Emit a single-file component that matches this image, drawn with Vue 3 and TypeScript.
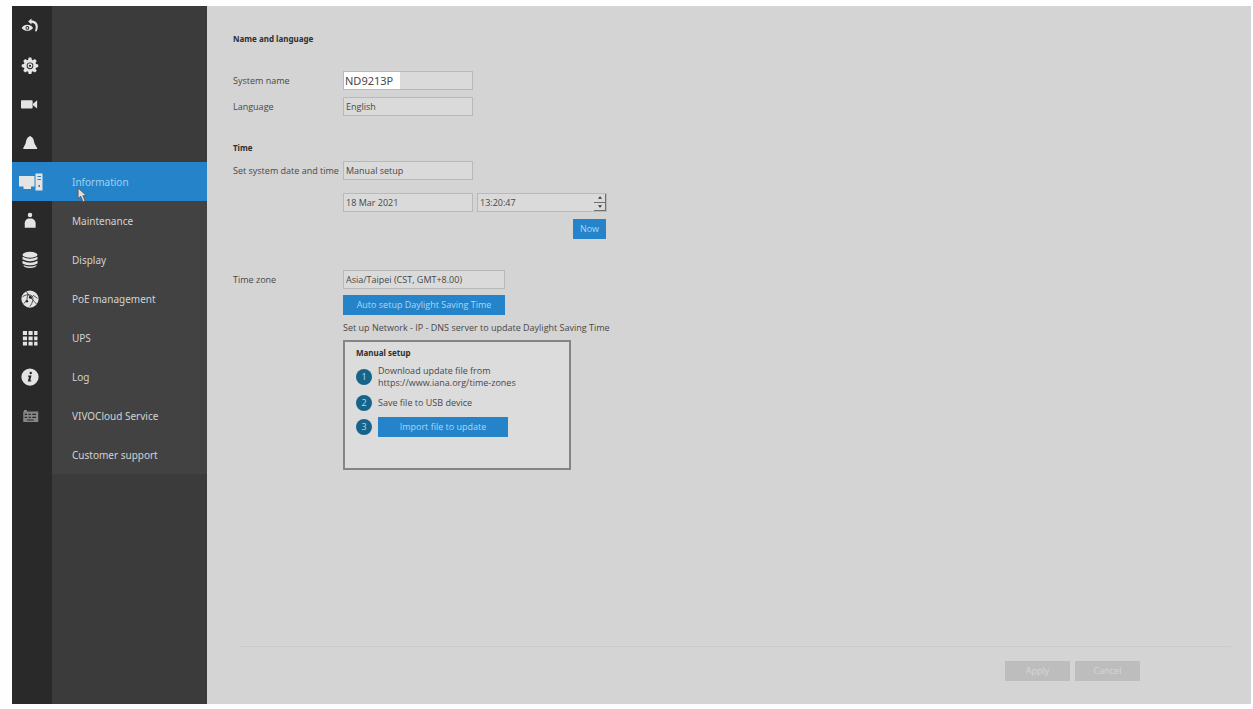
<script setup lang="ts">
import { ref } from 'vue'

type RailIcon =
  | 'back' | 'gear' | 'camera' | 'alarm' | 'system' | 'user'
  | 'storage' | 'network' | 'grid' | 'info' | 'keyboard'

interface RailItem {
  icon: RailIcon
  label: string
}

const rail: RailItem[] = [
  { icon: 'back', label: 'Back to live view' },
  { icon: 'gear', label: 'General' },
  { icon: 'camera', label: 'Camera' },
  { icon: 'alarm', label: 'Alarm' },
  { icon: 'system', label: 'System' },
  { icon: 'user', label: 'User' },
  { icon: 'storage', label: 'Storage' },
  { icon: 'network', label: 'Network' },
  { icon: 'grid', label: 'Applications' },
  { icon: 'info', label: 'About' },
  { icon: 'keyboard', label: 'Keyboard' },
]

const pages: string[] = [
  'Information',
  'Maintenance',
  'Display',
  'PoE management',
  'UPS',
  'Log',
  'VIVOCloud Service',
  'Customer support',
]

const activeIcon = ref<RailIcon>('system')
const activePage = ref('Information')
const systemName = ref('ND9213P')
const language = ref('English')
const timeMode = ref('Manual setup')
const date = ref('18 Mar 2021')
const time = ref('13:20:47')
const zone = ref('Asia/Taipei (CST, GMT+8.00)')
</script>

<template>
  <div class="app">
    <nav class="rail" aria-label="Sections">
      <button
        v-for="item in rail"
        :key="item.icon"
        type="button"
        class="rail-item"
        :class="{ active: item.icon === activeIcon }"
        :aria-label="item.label"
        @click="activeIcon = item.icon"
      >
        <svg v-if="item.icon === 'back'" viewBox="0 0 24 24">
          <path fill-rule="evenodd" d="M1 14.500C4 9 13 9 16 14.500C13 19.500 4 19.500 1 14.500ZM8.500 12A2.500 2.500 0 1 0 8.500 17A2.500 2.500 0 1 0 8.500 12Z" />
          <circle cx="8.500" cy="14.500" r="1.200" />
          <path d="M9.500 6L14 2V4.500C21.500 4.500 24.500 11 21 19H18.500C21 12.500 19.500 7.800 14 7.500V10Z" />
        </svg>
        <svg v-else-if="item.icon === 'gear'" viewBox="0 0 24 24">
          <path fill-rule="evenodd" d="M10.200 2h3.600l.7 3 1.300.5L18.500 4 21 6.500l-1.600 2.700.6 1.300 3 .7v3.600l-3 .7-.6 1.300L21 19.500 18.500 22l-2.700-1.600-1.300.6-.7 3h-3.600l-.7-3-1.300-.6L5.500 22 3 19.500l1.600-2.700-.6-1.300-3-.7v-3.600l3-.7.6-1.300L3 6.500 5.500 4l2.700 1.500 1.300-.5ZM12 8.500a4.500 4.500 0 1 0 0 9a4.500 4.500 0 1 0 0-9Z" />
          <path fill-rule="evenodd" d="M12 9.700a3.300 3.300 0 1 0 0 6.600a3.300 3.300 0 1 0 0-6.600ZM12 11.500a1.500 1.500 0 1 1 0 3a1.500 1.500 0 1 1 0-3Z" />
        </svg>
        <svg v-else-if="item.icon === 'camera'" viewBox="0 0 24 24">
          <path d="M0 8a1 1 0 0 1 1-1H14.500a1 1 0 0 1 1 1v9a1 1 0 0 1-1 1H1a1 1 0 0 1-1-1ZM16 11.500L21.500 7V18L16 13.500Z" />
        </svg>
        <svg v-else-if="item.icon === 'alarm'" viewBox="0 0 24 24">
          <path d="M10.700 3.500a1.500 1.500 0 0 1 2.800 0C17 5 17.300 9.500 18.200 13L21.500 18.500V20H3V18.500L6 13C6.900 9.500 7.200 5 10.700 3.500Z" />
        </svg>
        <svg v-else-if="item.icon === 'system'" class="wide" viewBox="0 0 26 20">
          <path d="M2 4H17.500V14.500H14V17H6.500V14.500H2Z" />
          <path fill-rule="evenodd" d="M18.500 1.500H25.500V18.500H18.500ZM20.500 4V5H24V4ZM20.500 7V8H24V7ZM21.500 13V15H23V13Z" />
        </svg>
        <svg v-else-if="item.icon === 'user'" viewBox="0 0 24 24">
          <circle cx="12" cy="4" r="3" />
          <path d="M9.500 8.500H14.500Q19.500 10.500 19.500 15V21H5V15Q5 10.500 9.500 8.500Z" />
        </svg>
        <svg v-else-if="item.icon === 'storage'" viewBox="0 0 24 24">
          <ellipse cx="12" cy="5" rx="10" ry="4" />
          <path d="M2 7.500Q12 13 22 7.500V11Q12 16.500 2 11ZM2 13Q12 18.500 22 13V16.500Q12 21.500 2 16.500Z" />
          <path d="M3 18.500Q12 23 21 18.500Q20 22.500 12 22.500Q4 22.500 3 18.500Z" />
        </svg>
        <svg v-else-if="item.icon === 'network'" viewBox="0 0 24 24">
          <circle cx="12" cy="12" r="11.500" />
          <path class="cut" d="M7 2Q12 10 21 19M2 9Q9 4 15 8Q18 13 12 22M4 18Q9 14 9 6M16 7L22 11" />
          <circle class="hole" cx="12.500" cy="9.500" r="2" />
          <circle class="hole" cx="8" cy="15" r="1.600" />
        </svg>
        <svg v-else-if="item.icon === 'grid'" viewBox="0 0 24 24">
          <path d="M2.500 2.500H8V8H2.500ZM10 2.500H15.500V8H10ZM17.500 2.500H22V8H17.500ZM2.500 10H8V15H2.500ZM10 10H15.500V15H10ZM17.500 10H22V15H17.500ZM2.500 17H8V22H2.500ZM10 17H15.500V22H10ZM17.500 17H22V22H17.500Z" />
        </svg>
        <svg v-else-if="item.icon === 'info'" viewBox="0 0 24 24">
          <circle cx="12" cy="12" r="11.500" />
          <circle class="hole" cx="13" cy="6.700" r="1.600" />
          <path class="hole" d="M9.500 10H14L12.300 16.500H14L13.500 18H9L10.700 11.500H9.200Z" />
        </svg>
        <svg v-else class="dim" viewBox="0 0 24 24">
          <path fill-rule="evenodd" d="M4 6V4H8V6H23V20H3V6ZM5 9V10.500H8V9ZM10 9V10.500H13V9ZM15 9V10.500H20V9ZM5 13V14.500H8V13ZM10 13V14.500H13V13ZM15 13V14.500H20V13ZM8 16.500V18H17V16.500Z" />
        </svg>
      </button>
    </nav>

    <nav class="submenu" aria-label="System pages">
      <a
        v-for="page in pages"
        :key="page"
        href="#"
        class="submenu-item"
        :class="{ active: page === activePage }"
        @click.prevent="activePage = page"
      >{{ page }}</a>
      <svg class="pointer" viewBox="0 0 12 18" aria-hidden="true">
        <path d="M1 1V13L4 10.500L6.500 16.500L9 15.500L6.500 9.800H10.500Z" />
      </svg>
    </nav>

    <main class="content">
      <form class="settings" @submit.prevent>
        <h2 class="title">Name and language</h2>

        <div class="row first">
          <label for="system-name">System name</label>
          <div class="field name-field">
            <input id="system-name" v-model="systemName" type="text" />
          </div>
        </div>
        <div class="row near">
          <label for="language">Language</label>
          <select id="language" v-model="language" class="field">
            <option>English</option>
          </select>
        </div>

        <h2 class="title time-title">Time</h2>
        <div class="row near">
          <label for="time-mode">Set system date and time</label>
          <select id="time-mode" v-model="timeMode" class="field">
            <option>Manual setup</option>
          </select>
        </div>

        <div class="indent clock">
          <input v-model="date" class="field" type="text" aria-label="Date" />
          <div class="field spin">
            <input v-model="time" type="text" aria-label="Time" />
            <div class="steppers">
              <button type="button" aria-label="Later"><svg viewBox="0 0 6 4"><path d="M3 0L6 4H0Z" /></svg></button>
              <button type="button" aria-label="Earlier"><svg viewBox="0 0 6 4"><path d="M3 4L6 0H0Z" /></svg></button>
            </div>
          </div>
        </div>
        <div class="indent now-line">
          <button type="button" class="primary now">Now</button>
        </div>

        <div class="row zone-row">
          <label for="zone">Time zone</label>
          <select id="zone" v-model="zone" class="field zone">
            <option>Asia/Taipei (CST, GMT+8.00)</option>
          </select>
        </div>
        <div class="indent zone-tools">
          <button type="button" class="primary auto">Auto setup Daylight Saving Time</button>
          <p class="note">Set up Network - IP - DNS server to update Daylight Saving Time</p>
          <section class="manual">
            <h3 class="title">Manual setup</h3>
            <ol class="steps">
              <li>
                <span class="num">1</span>
                <span>Download update file from<br />https://www.iana.org/time-zones</span>
              </li>
              <li>
                <span class="num">2</span>
                <span>Save file to USB device</span>
              </li>
              <li>
                <span class="num">3</span>
                <button type="button" class="primary import">Import file to update</button>
              </li>
            </ol>
          </section>
        </div>
      </form>

      <footer class="footer">
        <button type="button" disabled>Apply</button>
        <button type="button" disabled>Cancel</button>
      </footer>
    </main>
  </div>
</template>

<style>
body {
  margin: 0;
  background: #fefefe;
}
</style>

<style scoped>
.app {
  box-sizing: border-box;
  display: flex;
  min-height: 100vh;
  border: solid #fefefe;
  border-width: 6px 2px 5px 12px;
  font: 9px/12px "Open Sans", "Noto Sans", sans-serif;
  color: #484848;
  background: #d4d4d4;
}
.app * {
  box-sizing: border-box;
}
button,
input,
select {
  margin: 0;
  padding: 0;
  border: 0;
  border-radius: 0;
  font: inherit;
  color: inherit;
  background: none;
  appearance: none;
}
.rail {
  flex: 0 0 40px;
  background: #292929;
}
.rail-item {
  display: flex;
  align-items: center;
  justify-content: center;
  width: 100%;
  height: 39px;
  padding-right: 4px;
  fill: #e4e4e4;
}
.rail-item svg {
  width: 18px;
  height: 18px;
}
.rail-item svg.wide {
  width: 26px;
  height: 20px;
}
.rail-item svg.dim {
  fill: #858585;
}
.hole {
  fill: #292929;
}
.cut {
  fill: none;
  stroke: #292929;
  stroke-width: 1;
}
.active {
  background: #2583c9;
}
.submenu {
  position: relative;
  flex: 0 0 155px;
  padding-top: 156px;
  background: #3b3b3b;
}
.submenu-item {
  display: flex;
  align-items: center;
  height: 39px;
  padding-left: 20px;
  font-family: "Noto Sans", "Open Sans", sans-serif;
  font-size: 10px;
  color: #d2d2d2;
  text-decoration: none;
  background: #424242;
}
.submenu-item.active {
  color: #9cd3f4;
  background: #2583c9;
}
.pointer {
  position: absolute;
  top: 181px;
  left: 25px;
  width: 11px;
  height: 16px;
  fill: #dedede;
  stroke: #555;
}
.content {
  flex: 1;
  display: flex;
  flex-direction: column;
  min-width: 0;
}
.settings {
  padding: 27px 0 24px 26px;
}
.title {
  margin: 0;
  font-family: "Noto Sans", "Open Sans", sans-serif;
  font-size: 8px;
  line-height: 12px;
  font-weight: 700;
  color: #2e2e2e;
}
.row {
  display: flex;
  align-items: center;
}
.row label {
  flex: 0 0 110px;
  white-space: nowrap;
}
.first {
  margin-top: 26px;
}
.near {
  margin-top: 7px;
}
.field {
  width: 130px;
  height: 19px;
  padding: 0 2px;
  border: 1px solid #b9b9b9;
  background: #dadada;
}
.name-field {
  padding: 0;
}
.name-field input {
  display: block;
  width: 56px;
  height: 100%;
  padding-left: 1px;
  font-family: "Noto Sans", "Open Sans", sans-serif;
  font-size: 11px;
  background: #fff;
}
.time-title {
  margin-top: 26px;
}
.indent {
  margin-left: 110px;
}
.clock {
  display: flex;
  gap: 4px;
  margin-top: 13px;
}
.spin {
  display: flex;
  justify-content: space-between;
  padding-right: 0;
}
.spin input {
  width: 100px;
}
.steppers {
  display: flex;
  flex-direction: column;
  width: 12px;
  border-right: 1px solid #707070;
  border-bottom: 1px solid #707070;
}
.steppers button {
  display: flex;
  flex: 1;
  align-items: center;
  justify-content: center;
}
.steppers button:first-child {
  border-bottom: 1px solid #707070;
}
.steppers svg {
  width: 4px;
  height: 3px;
  fill: #333;
}
.primary {
  display: block;
  height: 20px;
  color: #a9d9f7;
  background: #2583c9;
}
.now-line {
  display: flex;
  justify-content: flex-end;
  width: 263px;
  margin-top: 7px;
}
.now {
  width: 33px;
}
.zone-row {
  margin-top: 31px;
}
.zone {
  width: 162px;
}
.zone-tools {
  margin-top: 6px;
}
.auto {
  width: 162px;
}
.note {
  margin: 7px 0 6px;
}
.manual {
  width: 228px;
  height: 130px;
  padding: 5px 11px;
  border: 2px solid #858585;
  background: #dcdcdc;
}
.steps {
  display: grid;
  gap: 4px;
  margin: 6px 0 0;
  padding: 0;
  list-style: none;
}
.steps li {
  display: flex;
  align-items: center;
  gap: 6px;
  min-height: 20px;
}
.num {
  flex: 0 0 16px;
  height: 16px;
  border-radius: 50%;
  line-height: 16px;
  text-align: center;
  color: #b4dcea;
  background: #17648a;
}
.import {
  width: 130px;
}
.footer {
  display: flex;
  gap: 5px;
  justify-content: flex-end;
  margin: auto 20px 23px 32px;
  padding: 14px 91px 0 0;
  border-top: 1px solid #cacaca;
}
.footer button {
  width: 65px;
  height: 20px;
  color: #d6d6d6;
  background: #bdbdbd;
}
</style>
